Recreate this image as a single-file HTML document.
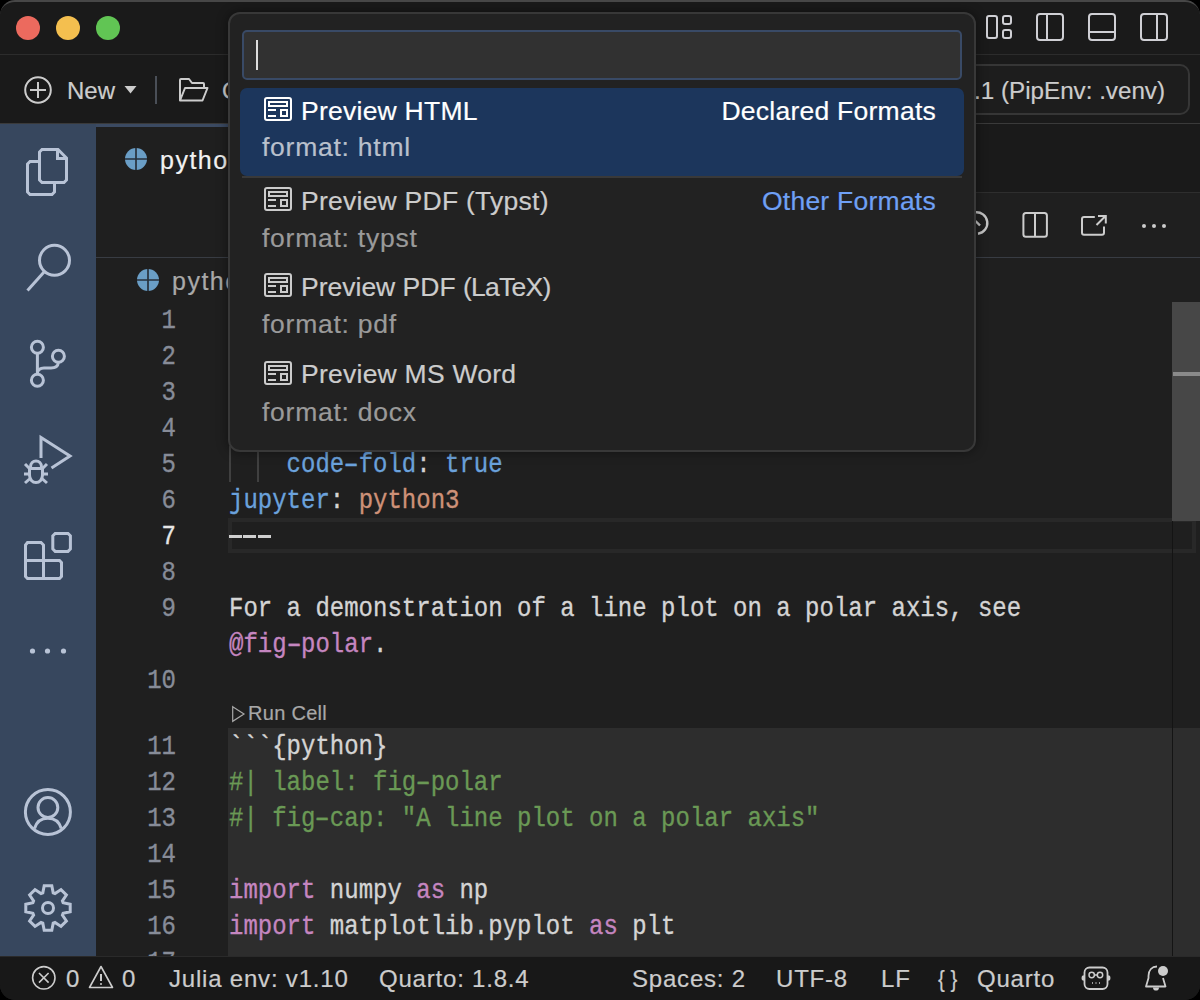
<!DOCTYPE html>
<html><head><meta charset="utf-8">
<style>
*{margin:0;padding:0;box-sizing:border-box}
html,body{width:1200px;height:1000px;overflow:hidden;background:#000}
body{font-family:"Liberation Sans",sans-serif;position:relative}
.win{position:absolute;left:0;top:0;width:1200px;height:1000px;border-radius:15px;overflow:hidden;background:#1f1f1f}
.abs{position:absolute}
.title{left:0;top:0;width:1200px;height:55px;background:#1a1a1a;border-bottom:1px solid #2c2c2c}
.tl{position:absolute;width:24px;height:24px;border-radius:50%;top:16px}
.toolbar{left:0;top:55px;width:1200px;height:69px;background:#1a1a1a;border-bottom:1px solid #3a3a3a}
.activity{left:0;top:124px;width:96px;height:832px;background:#37475e}
.tabbar{left:96px;top:124px;width:1104px;height:69px;background:#1a1a1a}
.tab{left:96px;top:124px;width:780px;height:69px;background:#1f1f1f;border-top:3px solid #3b4a62}
.actions{left:96px;top:192px;width:1104px;height:66px;background:#1f1f1f;border-top:1px solid #2e2e2e;border-bottom:1px solid #383c43}
.crumbs{left:96px;top:258px;width:1104px;height:44px;background:#1f1f1f}
.status{left:0;top:956px;width:1200px;height:44px;background:#181818;border-top:1px solid #2a2a2a}
.sb{position:absolute;top:965px;font-size:24px;letter-spacing:0.8px;color:#cccccc;line-height:28px;white-space:pre}
.ln{position:absolute;left:96px;width:80px;text-align:right;font-family:"Liberation Mono",monospace;font-size:24px;color:#878c98;line-height:36px;margin-top:2px;transform:scaleY(1.12);transform-origin:0 24.4px}
.code{position:absolute;left:229px;font-family:"Liberation Mono",monospace;font-size:24px;color:#d4d4d4;line-height:36px;white-space:pre;margin-top:2px;transform:scaleY(1.12);transform-origin:0 24.4px}
.code,.ln{-webkit-text-stroke:0.3px currentColor}
.qt,.qd,.sb,.ui{-webkit-text-stroke:0.2px currentColor}
.dh{display:inline-block;transform:scaleX(1.65)}
.kw{color:#c586c0}.cm{color:#6a9955}.key{color:#6ba2dc}.str{color:#ce9178}
.qp{left:228px;top:12px;width:748px;height:440px;background:#222222;border:2px solid #383838;border-radius:12px;box-shadow:0 0 12px rgba(0,0,0,.45)}
.inp{left:242px;top:30px;width:720px;height:50px;background:#313131;border:2px solid #394a66;border-radius:5px}
.sel{left:240px;top:88px;width:724px;height:88px;background:#1c365c;border-radius:7px}
.qt{position:absolute;font-size:26.5px;letter-spacing:0.25px;color:#cccccc;white-space:pre;line-height:30px}
.qd{position:absolute;font-size:26.5px;letter-spacing:0.75px;color:#9a9a9a;white-space:pre;line-height:30px}
svg{position:absolute;overflow:visible}
</style></head><body>
<div class="win">
  <div class="abs title"></div>
  <div class="tl" style="left:16px;background:#ec6a5e"></div>
  <div class="tl" style="left:56px;background:#f4bf4f"></div>
  <div class="tl" style="left:96px;background:#61c554"></div>

  <div class="abs toolbar"></div>
  <div class="abs activity"></div>
  <div class="abs tabbar"></div>
  <div class="abs actions"></div>
  <div class="abs tab"></div>
  <div class="abs crumbs"></div>

  <!-- editor -->
  <div class="abs" style="left:228px;top:728px;width:972px;height:228px;background:#2d2d2d"></div>
  <div class="abs" style="left:228px;top:518px;width:968px;height:35px;border:4px solid #282828"></div>
  <div class="abs" style="left:1172px;top:302px;width:28px;height:219px;background:#474747"></div>
  <div class="abs" style="left:1173px;top:372px;width:27px;height:4px;background:#8a8a8a"></div>
  <div class="abs" style="left:1172px;top:521px;width:1px;height:435px;background:#141414"></div>
  <div class="abs" style="left:229px;top:446px;width:2px;height:36px;background:#404040"></div>
  <div class="abs" style="left:257px;top:446px;width:2px;height:36px;background:#404040"></div>

  <div class="ln" style="top:302px">1</div>
  <div class="ln" style="top:338px">2</div>
  <div class="ln" style="top:374px">3</div>
  <div class="ln" style="top:410px">4</div>
  <div class="ln" style="top:446px">5</div>
  <div class="ln" style="top:482px">6</div>
  <div class="ln" style="top:518px;color:#e6e6e6">7</div>
  <div class="ln" style="top:554px">8</div>
  <div class="ln" style="top:590px">9</div>
  <div class="ln" style="top:662px">10</div>
  <div class="ln" style="top:728px">11</div>
  <div class="ln" style="top:764px">12</div>
  <div class="ln" style="top:800px">13</div>
  <div class="ln" style="top:836px">14</div>
  <div class="ln" style="top:872px">15</div>
  <div class="ln" style="top:908px">16</div>
  <div class="ln" style="top:944px">17</div>

  <div class="code" style="top:446px">    <span class="key">code<span class="dh">-</span>fold</span>: <span class="key">true</span></div>
  <div class="code" style="top:482px"><span class="key">jupyter</span>: <span class="str">python3</span></div>
  <div class="abs" style="left:229px;top:535px;width:13px;height:3px;background:#cfcfcf"></div><div class="abs" style="left:243px;top:535px;width:13px;height:3px;background:#cfcfcf"></div><div class="abs" style="left:258px;top:535px;width:13px;height:3px;background:#cfcfcf"></div>
  <div class="code" style="top:590px">For a demonstration of a line plot on a polar axis, see</div>
  <div class="code" style="top:626px"><span class="kw">@fig<span class="dh">-</span>polar</span>.</div>
  <div class="abs ui" style="left:230px;top:699px;font-size:20px;letter-spacing:0.3px;line-height:29px;color:#a8a8a8;white-space:pre"><svg style="left:2px;top:6.5px" width="14" height="17" viewBox="0 0 14 17"><path d="M0.7 0.7 L12 8 L0.7 15.3 Z" fill="none" stroke="#a8a8a8" stroke-width="1.2"/></svg><span style="margin-left:18px">Run Cell</span></div>
  <div class="code" style="top:728px">```{python}</div>
  <div class="code cm" style="top:764px">#| label: fig<span class="dh">-</span>polar</div>
  <div class="code cm" style="top:800px">#| fig<span class="dh">-</span>cap: "A line plot on a polar axis"</div>
  <div class="code" style="top:872px"><span class="kw">import</span> numpy <span class="kw">as</span> np</div>
  <div class="code" style="top:908px"><span class="kw">import</span> matplotlib.pyplot <span class="kw">as</span> plt</div>
  <div class="code" style="top:944px">     </div>

  <!-- title icons -->
  <svg style="left:975px;top:5px" width="210" height="45" viewBox="975 5 210 45" fill="none" stroke="#cfcfd4" stroke-width="2">
    <rect x="987" y="16" width="10" height="22" rx="2"/>
    <rect x="1003" y="16" width="8" height="8" rx="2"/>
    <rect x="1003" y="30" width="8" height="8" rx="2"/>
    <rect x="1037" y="14" width="26" height="26" rx="3"/>
    <line x1="1047" y1="14" x2="1047" y2="40"/>
    <rect x="1089" y="14" width="26" height="26" rx="3"/>
    <line x1="1089" y1="32" x2="1115" y2="32"/>
    <rect x="1141" y="14" width="26" height="26" rx="3"/>
    <line x1="1157" y1="14" x2="1157" y2="40"/>
  </svg>

  <!-- toolbar -->
  <svg style="left:0;top:56px" width="240" height="68" viewBox="0 56 240 68" fill="none" stroke="#cccccc" stroke-width="2">
    <circle cx="38" cy="90" r="12.8"/>
    <line x1="38" y1="82" x2="38" y2="98"/><line x1="30" y1="90" x2="46" y2="90"/>
    <path d="M124.5 86 H136.5 L130.5 93.5 Z" fill="#cccccc" stroke="none"/>
    <line x1="156" y1="76" x2="156" y2="104" stroke="#4a4f57" stroke-width="2"/>
    <path d="M180 100.5 V80 Q180 79 181 79 H189 L192 83 H203 Q204 83 204 84 V88 M180 100.5 L185 88 H207.5 L202.5 100.5 Z" stroke-linejoin="round"/>
  </svg>
  <div class="abs ui" style="left:67px;top:77px;font-size:24px;line-height:28px;color:#cccccc">New</div>
  <div class="abs ui" style="left:222px;top:77px;font-size:24px;line-height:28px;color:#cccccc">Open</div>
  <div class="abs" style="left:900px;top:64px;width:290px;height:51px;border:2px solid #363636;border-radius:10px;background:#1d1d1d"></div>
  <div class="abs ui" style="left:880px;top:77px;width:285px;text-align:right;font-size:24.2px;line-height:28px;color:#cccccc;white-space:pre">3.12.1 (PipEnv: .venv)</div>

  <!-- tab -->
  <svg style="left:124px;top:147px" width="24" height="24" viewBox="0 0 24 24">
    <circle cx="12" cy="12" r="11" fill="#6a9ec6"/>
    <path d="M12 1 V23 M1 12 H23" stroke="#27313c" stroke-width="1.7"/>
  </svg>
  <div class="abs ui" style="left:160px;top:145px;font-size:25px;letter-spacing:1.5px;line-height:30px;color:#f2f2f2;white-space:pre">python.qmd</div>

  <!-- breadcrumbs -->
  <svg style="left:136px;top:268px" width="24" height="24" viewBox="0 0 24 24">
    <circle cx="12" cy="12" r="11" fill="#6a9ec6"/>
    <path d="M12 1 V23 M1 12 H23" stroke="#27313c" stroke-width="1.7"/>
  </svg>
  <div class="abs ui" style="left:172px;top:266px;font-size:25px;letter-spacing:1.5px;line-height:30px;color:#a9a9a9;white-space:pre">python.qmd</div>

  <!-- editor actions -->
  <svg style="left:950px;top:200px" width="230" height="50" viewBox="950 200 230 50" fill="none" stroke="#cccccc" stroke-width="2">
    <path d="M975 212.3 A10.5 10.5 0 1 1 978 233.7" stroke="#c4c4c4" stroke-width="2.4"/>
    <line x1="975.5" y1="221" x2="980" y2="225.5" stroke="#c4c4c4" stroke-width="2.4"/>
    <rect x="1023.4" y="213.1" width="23.5" height="23.7" rx="2.5"/>
    <line x1="1035" y1="213.1" x2="1035" y2="236.8"/>
    <path d="M1094.8 217 H1084 Q1082 217 1082 219 V232.8 Q1082 234.8 1084 234.8 H1102 Q1104 234.8 1104 232.8 V226.6 M1096.5 225 L1105.3 216.2 M1098 216 H1105.8 V223.6"/>
    <circle cx="1144" cy="226" r="2" fill="#cccccc" stroke="none"/>
    <circle cx="1154" cy="226" r="2" fill="#cccccc" stroke="none"/>
    <circle cx="1164" cy="226" r="2" fill="#cccccc" stroke="none"/>
  </svg>

  <!-- activity bar icons -->
  <svg style="left:17px;top:140px" width="60" height="60" viewBox="0 0 60 60" fill="none" stroke="#b8c3d6" stroke-width="3">
    <path d="M25 9.5 H41 L49.5 18 V40 L47 42.5 H25 L22.5 40 V12 Z"/>
    <path d="M40.5 9.5 V18.5 H49.5"/>
    <path d="M22.5 21.5 H13 L10.5 24 V52 L13 54.5 H35 L37.5 52 V42.5"/>
  </svg>
  <svg style="left:17px;top:236px" width="60" height="60" viewBox="0 0 60 60" fill="none" stroke="#b8c3d6" stroke-width="3">
    <circle cx="37.5" cy="24.3" r="15"/>
    <line x1="27.5" y1="35.5" x2="10.5" y2="54.5"/>
  </svg>
  <svg style="left:17px;top:332px" width="60" height="60" viewBox="0 0 60 60" fill="none" stroke="#b8c3d6" stroke-width="3">
    <circle cx="20.4" cy="15.3" r="6"/>
    <circle cx="41.4" cy="24.3" r="6"/>
    <circle cx="20.4" cy="48.3" r="6"/>
    <path d="M20.4 21.3 V42.3"/>
    <path d="M20.4 41 C21 37.5 23.5 36 27 36 H34 C38 36 41 34 41.4 30.3"/>
  </svg>
  <svg style="left:17px;top:428px" width="60" height="60" viewBox="0 0 60 60" fill="none" stroke="#b8c3d6" stroke-width="3">
    <path d="M24 30 V9.5 L53 28 L34.5 40"/>
    <path d="M13.5 39 C13.5 35 16 33 19 33 C22 33 24.5 35 24.5 39"/>
    <path d="M12.5 40.5 H25.5 V47 C25.5 51.5 22.5 54.5 19 54.5 C15.5 54.5 12.5 51.5 12.5 47 Z"/>
    <path d="M8 36 L12.5 40.5 M30 36 L25.5 40.5 M7 46 H12.5 M31 46 H25.5 M8 55 L12.5 51 M30 55 L25.5 51"/>
  </svg>
  <svg style="left:17px;top:525px" width="60" height="60" viewBox="0 0 60 60" fill="none" stroke="#b8c3d6" stroke-width="3">
    <path d="M38.2 8.4 H51 L53.4 10.8 V24 L51 26.4 H38.2 L35.8 24 V10.8 Z"/>
    <path d="M10.5 17.5 H24 L26.5 20 V53.5 H10.5 L8.5 51.5 V20 Z"/>
    <path d="M8.5 35.5 H42.5 L44.5 37.5 V51.5 L42.5 53.5 H10.5"/>
  </svg>
  <svg style="left:17px;top:621px" width="60" height="60" viewBox="0 0 60 60" fill="#b8c3d6">
    <circle cx="15.5" cy="30" r="2.6"/><circle cx="30.5" cy="30" r="2.6"/><circle cx="46.5" cy="30" r="2.6"/>
  </svg>
  <svg style="left:17px;top:782px" width="60" height="60" viewBox="0 0 60 60" fill="none" stroke="#b8c3d6" stroke-width="3">
    <circle cx="30.9" cy="30" r="22.5"/>
    <circle cx="30.9" cy="25.5" r="9.9"/>
    <path d="M17.5 46.5 C19.5 40 24.5 36.3 30.9 36.3 C37.3 36.3 42.3 40 44.3 46.5"/>
  </svg>
  <svg style="left:17px;top:877px" width="60" height="60" viewBox="0 0 60 60" fill="none" stroke="#b8c3d6" stroke-width="3" stroke-linejoin="miter">
    <path d="M25.8 15.9 L27.2 8.8 L34.8 8.8 L36.2 15.9 L38.0 16.6 L44.0 12.6 L49.4 18.0 L45.4 24.0 L46.1 25.8 L53.2 27.2 L53.2 34.8 L46.1 36.2 L45.4 38.0 L49.4 44.0 L44.0 49.4 L38.0 45.4 L36.2 46.1 L34.8 53.2 L27.2 53.2 L25.8 46.1 L24.0 45.4 L18.0 49.4 L12.6 44.0 L16.6 38.0 L15.9 36.2 L8.8 34.8 L8.8 27.2 L15.9 25.8 L16.6 24.0 L12.6 18.0 L18.0 12.6 L24.0 16.6Z"/>
    <circle cx="31" cy="31" r="5.5"/>
  </svg>

  <!-- quick pick -->
  <div class="abs qp"></div>
  <div class="abs inp"></div>
  <div class="abs" style="left:256px;top:40px;width:2px;height:30px;background:#dddddd"></div>
  <div class="abs sel"></div>
  <div class="abs" style="left:242px;top:176px;width:720px;height:2px;background:#393939"></div>

  <svg style="left:264px;top:97px" width="28" height="24" viewBox="0 0 28 24" fill="none" stroke="#ffffff" stroke-width="2">
    <rect x="1" y="1" width="26" height="22" rx="2"/><rect x="5" y="5" width="18" height="4"/><path d="M4 13 H12 M4 19 H12"/><rect x="17" y="13" width="6" height="6"/>
  </svg>
  <div class="qt" style="left:301px;top:96px;color:#ffffff">Preview HTML</div>
  <div class="qt" style="left:636px;top:96px;width:300px;text-align:right;color:#ffffff">Declared Formats</div>
  <div class="qd" style="left:262px;top:132px;color:#b9c0cc">format: html</div>

  <svg style="left:264px;top:187px" width="28" height="24" viewBox="0 0 28 24" fill="none" stroke="#cccccc" stroke-width="2">
    <rect x="1" y="1" width="26" height="22" rx="2"/><rect x="5" y="5" width="18" height="4"/><path d="M4 13 H12 M4 19 H12"/><rect x="17" y="13" width="6" height="6"/>
  </svg>
  <div class="qt" style="left:301px;top:186px">Preview PDF (Typst)</div>
  <div class="qt" style="left:636px;top:186px;width:300px;text-align:right;color:#6fa0f5">Other Formats</div>
  <div class="qd" style="left:262px;top:223px">format: typst</div>

  <svg style="left:264px;top:273px" width="28" height="24" viewBox="0 0 28 24" fill="none" stroke="#cccccc" stroke-width="2">
    <rect x="1" y="1" width="26" height="22" rx="2"/><rect x="5" y="5" width="18" height="4"/><path d="M4 13 H12 M4 19 H12"/><rect x="17" y="13" width="6" height="6"/>
  </svg>
  <div class="qt" style="left:301px;top:272px;letter-spacing:0">Preview PDF <span style="letter-spacing:-0.75px">(LaTeX)</span></div>
  <div class="qd" style="left:262px;top:309px">format: pdf</div>

  <svg style="left:264px;top:361px" width="28" height="24" viewBox="0 0 28 24" fill="none" stroke="#cccccc" stroke-width="2">
    <rect x="1" y="1" width="26" height="22" rx="2"/><rect x="5" y="5" width="18" height="4"/><path d="M4 13 H12 M4 19 H12"/><rect x="17" y="13" width="6" height="6"/>
  </svg>
  <div class="qt" style="left:301px;top:359px">Preview MS Word</div>
  <div class="qd" style="left:262px;top:397px">format: docx</div>

  <!-- status bar -->
  <div class="abs status"></div>
  <svg style="left:25px;top:960px" width="120" height="40" viewBox="25 960 120 40" fill="none" stroke="#cccccc" stroke-width="1.6">
    <circle cx="43.8" cy="977.8" r="11.2"/>
    <path d="M39 973 L48.6 982.6 M48.6 973 L39 982.6"/>
    <path d="M101 966.5 L112.5 987.5 H89.5 Z" stroke-linejoin="round"/>
    <path d="M101 974 V981" stroke-width="2"/><circle cx="101" cy="984" r="1" fill="#cccccc" stroke="none"/>
  </svg>
  <div class="sb" style="left:66px">0</div>
  <div class="sb" style="left:122px">0</div>
  <div class="sb" style="left:169px">Julia env: v1.10</div>
  <div class="sb" style="left:379px">Quarto: 1.8.4</div>
  <div class="sb" style="left:632px">Spaces: 2</div>
  <div class="sb" style="left:776px">UTF-8</div>
  <div class="sb" style="left:881px">LF</div>
  <div class="sb" style="left:938px;letter-spacing:0;transform:scaleX(0.85);transform-origin:0 0">{ }</div>
  <div class="sb" style="left:977px">Quarto</div>
  <svg style="left:1070px;top:955px" width="130" height="45" viewBox="1070 955 130 45" fill="none" stroke="#cccccc" stroke-width="1.8">
    <rect x="1084.5" y="967.5" width="23" height="21.5" rx="5"/>
    <ellipse cx="1083.3" cy="978" rx="1.8" ry="2.8" fill="#cccccc" stroke="none"/><ellipse cx="1108.7" cy="978" rx="1.8" ry="2.8" fill="#cccccc" stroke="none"/>
    <circle cx="1091.7" cy="975" r="2.7" stroke-width="1.5"/><circle cx="1100" cy="975" r="2.7" stroke-width="1.5"/><path d="M1094.4 975 H1097.3" stroke-width="1.5"/>
    <path d="M1092 983 h1 M1095.5 983 h1 M1099 983 h1" stroke-width="1.5"/>
    <path d="M1163 978 L1165.5 986.5 H1146 L1148.5 978 V976 C1148.5 970 1152 966.5 1157 966.5" stroke-linejoin="round"/>
    <path d="M1153 987.5 C1153 990 1154.5 990.5 1156 990.5 C1157.5 990.5 1159 990 1159 987.5" fill="#cccccc" stroke="none"/>
    <circle cx="1163" cy="971" r="5" fill="#cccccc" stroke="none"/>
  </svg>
  <div class="abs" style="left:0;top:0;width:1200px;height:1000px;border-radius:15px;border-top:2px solid #474747;pointer-events:none"></div>
</div>
</body></html>
